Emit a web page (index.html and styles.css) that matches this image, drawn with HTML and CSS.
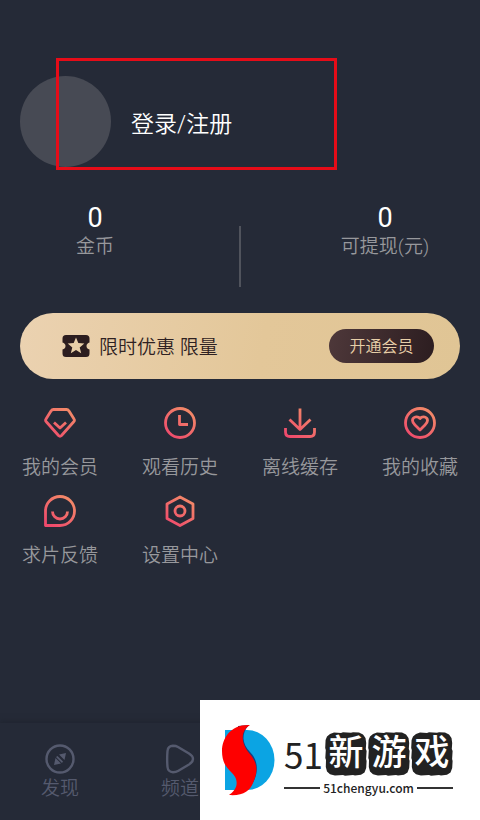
FILE: index.html
```html
<!DOCTYPE html>
<html lang="zh-CN">
<head>
<meta charset="utf-8">
<meta name="viewport" content="width=device-width, initial-scale=1">
<title>我的</title>
<link rel="stylesheet" href="styles.css">
</head>
<body>
<svg class="defs" aria-hidden="true">
  <defs>
    <linearGradient id="warm" gradientUnits="userSpaceOnUse" x1="6" y1="30" x2="26" y2="2">
      <stop offset="0" stop-color="#ef4a6c"/>
      <stop offset="1" stop-color="#f38c68"/>
    </linearGradient>
    <symbol id="stamp" viewBox="0 0 42 44" preserveAspectRatio="none">
      <path fill="#222" d="M5 2L9 .6 16 1 18 .3 26 .8 28 .2 34 .6 38 2.500 40.500 6 41.200 11 40.800 17 41.600 19 41.100 27 41.600 29 41.200 36 39.500 40.500 36 42.800 30 43.400 28 42.900 20 43.700 18 43 10 43.500 5 42.300 2 39.500 .8 35 1 28 .3 26 .8 18 .2 16 .6 8 2 4.500Z"/>
    </symbol>
  </defs>
</svg>
<div class="page">
  <main class="content">
    <header class="profile">
      <span class="avatar"></span>
      <a class="login" href="#login">登录/注册</a>
      <span class="highlight"></span>
    </header>

    <section class="stats">
      <div class="stat"><strong>0</strong><span>金币</span></div>
      <span class="divider"></span>
      <div class="stat"><strong>0</strong><span>可提现(元)</span></div>
    </section>

    <section class="promo">
      <svg class="ticket" viewBox="0 0 28 24" aria-hidden="true">
        <path fill="#2c1d1f" d="M4 1H24Q27.500 1 27.500 4.500V8.500Q24.500 9.500 24.500 12T27.500 15.500V19.500Q27.500 23 24 23H4Q.5 23 .5 19.500V15.500Q3.500 14.500 3.500 12T.5 8.500V4.500Q.5 1 4 1Z"/>
        <path fill="#e8cfa8" d="M14 3.500l2.300 5.500 6 .5-4.600 3.900 1.500 5.800-5.200-3.200-5.200 3.200 1.500-5.800L5.700 9.500l6-.5z"/>
      </svg>
      <span class="promo-text">限时优惠 限量</span>
      <button class="promo-button" type="button">开通会员</button>
    </section>

    <nav class="menu">
      <a href="#member">
        <svg class="icon" viewBox="0 0 32 32"><path d="M9.500 2.500H22.500Q24 2.500 25 4L30 12Q31 13.500 29.500 15L17.500 28.500Q16 30 14.500 28.500L2.500 15Q1 13.500 2 12L7 4Q8 2.500 9.500 2.500Z"/><path d="M10 15.500L16 21L22 15.500"/></svg>
        <span>我的会员</span>
      </a>
      <a href="#history">
        <svg class="icon" viewBox="0 0 32 32"><circle cx="16" cy="16" r="14.500"/><path d="M15.500 8V17.500H24"/></svg>
        <span>观看历史</span>
      </a>
      <a href="#offline">
        <svg class="icon" viewBox="0 0 32 32"><path d="M16 1.500V22M5.500 12.500L16 22.500L26.500 12.500M1.500 21V25Q1.500 29.500 6 29.500H26Q30.500 29.500 30.500 25V21"/></svg>
        <span>离线缓存</span>
      </a>
      <a href="#favorites">
        <svg class="icon" viewBox="0 0 32 32"><circle cx="16" cy="16" r="14.500"/><path d="M16 11.500C13.500 8.500 8.500 9.800 8.500 13.500C8.500 15.500 9.500 16.500 11 18L16 23L21 18C22.500 16.500 23.500 15.500 23.500 13.500C23.500 9.800 18.500 8.500 16 11.500Z"/></svg>
        <span>我的收藏</span>
      </a>
      <a href="#feedback">
        <svg class="icon" viewBox="0 0 32 32"><path d="M1.500 30.500V16A14.500 14.500 0 1 1 16 30.500Z"/><path d="M8.500 16.500A7.500 7.500 0 0 0 23.500 16.500"/></svg>
        <span>求片反馈</span>
      </a>
      <a href="#settings">
        <svg class="icon" viewBox="0 0 32 32"><path d="M16 2L29 9V23.500L16 30.500L3 23.500V9Z"/><circle cx="16" cy="16" r="5"/></svg>
        <span>设置中心</span>
      </a>
    </nav>
  </main>

  <nav class="tabs">
    <a href="#discover">
      <svg class="tab-icon" viewBox="0 0 30 30"><circle cx="15" cy="15" r="13.500"/><path class="solid" d="M21 9L19.500 16L14 10.500ZM9 21L10.500 14L16 19.500ZM12.500 12L18 17.500L17 19L11 13Z"/></svg>
      <span>发现</span>
    </a>
    <a href="#channels">
      <svg class="tab-icon" viewBox="0 0 30 30"><path d="M2.500 7Q3 2 8 1.800Q11 1.800 13 3L24 9.500Q28 12 28 15T24 20.500L13 27Q11 28.200 8 28.200Q3 28 2.500 23Q1.800 15 2.500 7Z"/></svg>
      <span>频道</span>
    </a>
  </nav>
</div>

<aside class="brand">
  <svg class="brand-mark" viewBox="0 0 56 74" aria-hidden="true">
    <path fill="#0ba4e3" d="M4 6H26A27.500 30 0 0 1 26 66H4Z"/>
    <path fill="#173f82" d="M28 1C20 9 21 20 29 28C42 41 34 60 26 66L18 66L17 2Z"/>
    <path fill="#fe0000" d="M29 1C10 0 1 14 1 27C1 38 5 43 11 49C19 57 16 66 8 71C22 72 29 67 32 59C38 46 36 38 28 29C20 19 19 7 29 1Z"/>
  </svg>
  <div class="brand-copy">
    <div class="brand-name">
      <b>51</b>
      <span class="tile"><svg aria-hidden="true"><use href="#stamp"/></svg><span>新</span></span>
      <span class="tile"><svg aria-hidden="true"><use href="#stamp"/></svg><span>游</span></span>
      <span class="tile"><svg aria-hidden="true"><use href="#stamp"/></svg><span>戏</span></span>
    </div>
    <div class="brand-url">51chengyu.com</div>
  </div>
</aside>
</body>
</html>
```
FILE: styles.css
```css
* {
  box-sizing: border-box;
}

body {
  margin: 0;
  background: #252a37;
  color: #97989c;
  font-family: Roboto, "Noto Sans CJK SC", sans-serif;
  font-size: 19px;
  font-weight: 350;
  line-height: 24px;
}

a {
  color: inherit;
  text-decoration: none;
}

.defs {
  position: absolute;
  width: 0;
  height: 0;
}

.page {
  display: flex;
  flex-direction: column;
  min-height: 100vh;
}

.content {
  padding: 56px 20px 24px;
}

.profile {
  position: relative;
  display: flex;
  align-items: center;
  gap: 20px;
  padding: 20px 0;
}

.avatar {
  width: 91px;
  height: 91px;
  border-radius: 50%;
  background: #474a54;
}

.login {
  padding-top: 6px;
  color: #fff;
  font-size: 23px;
  line-height: 32px;
}

.highlight {
  position: absolute;
  top: 2px;
  left: 36px;
  width: 281px;
  height: 112px;
  border: 3px solid #e60c18;
  pointer-events: none;
}

.stats {
  display: flex;
  justify-content: space-between;
  margin: 16px 0 26px;
}

.stat {
  display: flex;
  flex: 0 0 150px;
  flex-direction: column;
  align-items: center;
  gap: 2px;
}

.stat strong {
  color: #fff;
  font-size: 27px;
  font-weight: 400;
  line-height: 30px;
}

.divider {
  width: 2px;
  height: 61px;
  margin-top: 23px;
  background: #50535c;
}

.promo {
  display: flex;
  align-items: center;
  height: 66px;
  padding: 0 26px 0 42px;
  border-radius: 33px;
  background: linear-gradient(100deg, #ebd2b1, #e3c799 55%, #e0c595);
  color: #2e2122;
}

.ticket {
  width: 28px;
  height: 24px;
}

.promo-text {
  margin-left: 9px;
  padding-top: 4px;
}

.promo-button {
  width: 105px;
  height: 34px;
  margin-left: auto;
  padding: 2px 0 0;
  border: 0;
  border-radius: 17px;
  background: linear-gradient(100deg, #4e383a, #2c1d20);
  color: #e8cfa8;
  font: inherit;
  font-size: 16px;
}

.menu {
  display: grid;
  grid-template-columns: repeat(4, 1fr);
  gap: 15px 0;
  margin: 28px -20px 0;
}

.menu a {
  display: flex;
  flex-direction: column;
  align-items: center;
  gap: 17px;
}

.icon {
  width: 32px;
  height: 32px;
  fill: none;
  stroke: url(#warm);
  stroke-width: 2.8;
  stroke-linecap: butt;
  stroke-linejoin: round;
}

.tabs {
  display: grid;
  grid-template-columns: repeat(4, 1fr);
  height: 97px;
  margin-top: auto;
  padding-top: 21px;
  box-shadow: 0 -1px 6px #1f232e;
  color: #555a6e;
}

.tabs a {
  display: flex;
  flex-direction: column;
  align-items: center;
  gap: 3px;
}

.tab-icon {
  width: 30px;
  height: 30px;
  fill: none;
  stroke: currentColor;
  stroke-width: 2.4;
}

.tab-icon .solid {
  fill: currentColor;
  stroke: none;
}

.brand {
  position: fixed;
  right: 0;
  bottom: 0;
  display: flex;
  align-items: center;
  gap: 7px;
  width: 280px;
  height: 120px;
  padding: 2px 27px 0 21px;
  background: #fff;
  color: #222;
}

.brand-mark {
  flex: none;
  width: 56px;
  height: 74px;
}

.brand-copy {
  display: flex;
  flex: 1;
  flex-direction: column;
  min-width: 0;
  padding-top: 10px;
}

.brand-name {
  display: flex;
  align-items: center;
  gap: 1px;
}

.brand-name b {
  flex: 1;
  font-family: "Noto Sans CJK SC", sans-serif;
  font-size: 35px;
  font-weight: 400;
  line-height: 44px;
}

.tile {
  display: grid;
  flex: none;
  width: 42px;
  height: 44px;
  color: #fff;
  font-size: 35px;
  font-weight: 500;
  line-height: 44px;
  text-align: center;
}

.tile > * {
  grid-area: 1 / 1;
  width: 100%;
  height: 44px;
}

.brand-url {
  display: flex;
  align-items: center;
  gap: 3px;
  font-family: "Noto Sans CJK SC", sans-serif;
  font-size: 12px;
  font-weight: 500;
}

.brand-url::before,
.brand-url::after {
  flex: 1;
  height: 2px;
  background: #333;
  content: "";
}
```
